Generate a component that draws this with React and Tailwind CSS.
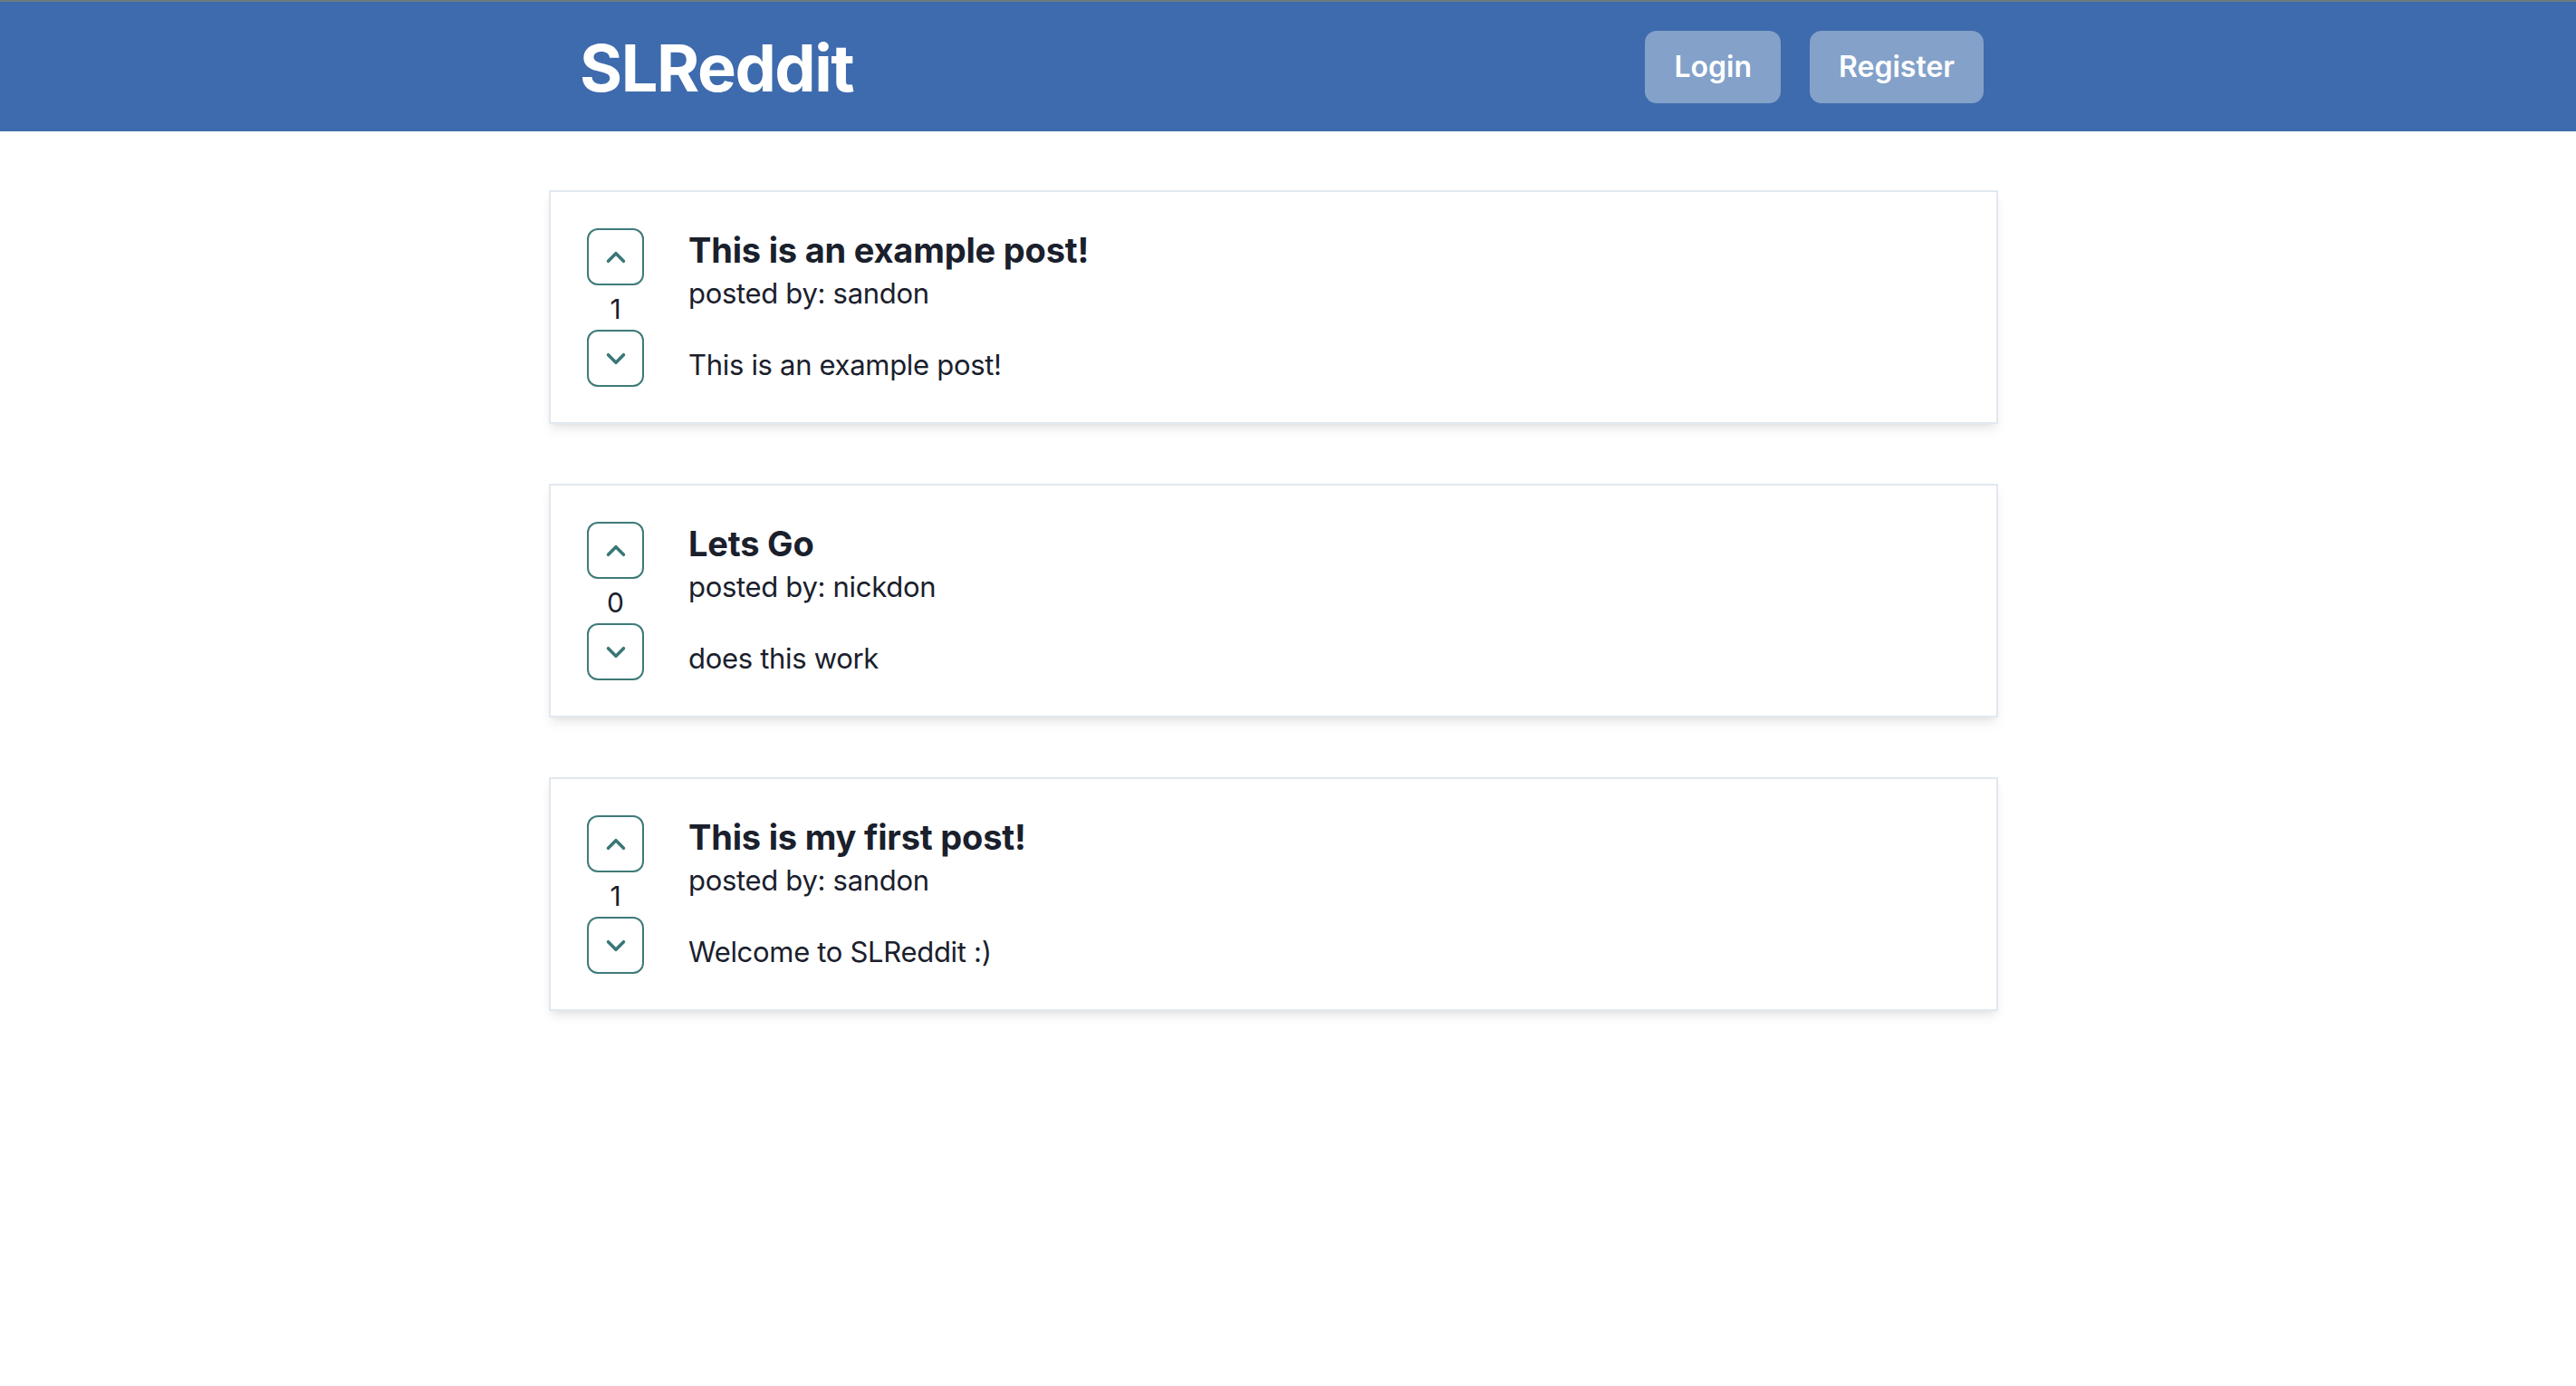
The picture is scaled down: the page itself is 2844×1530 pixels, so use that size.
import React, { useState } from "react";

const initialPosts = [
  { id: 1, title: "This is an example post!", author: "sandon", body: "This is an example post!", votes: 1 },
  { id: 2, title: "Lets Go", author: "nickdon", body: "does this work", votes: 0 },
  { id: 3, title: "This is my first post!", author: "sandon", body: "Welcome to SLReddit :)", votes: 1 },
];

/* -------------------- Chevron -------------------- */
const Chevron = ({ up }) => (
  <svg width="34" height="34" viewBox="0 0 24 24" fill="none">
    <path
      d={up ? "m18 15-6-6-6 6" : "m6 9 6 6 6-6"}
      stroke="#3a7777"
      strokeWidth="2.5"
      strokeLinecap="round"
      strokeLinejoin="round"
    />
  </svg>
);

const VoteButton = ({ up, onClick }) => (
  <button
    onClick={onClick}
    className="w-[63px] h-[63px] flex items-center justify-center rounded-[12px] border-2 border-[#3f7a7a] bg-white"
  >
    <Chevron up={up} />
  </button>
);

/* -------------------- Post card -------------------- */
function PostCard({ post, onVote }) {
  return (
    <div className="w-full flex items-start border-2 border-[#e2e8f0] bg-white px-[40px] pt-[40px] pb-[39px] shadow-[0_8px_12px_-2px_rgba(0,0,0,0.08),0_4px_8px_-4px_rgba(0,0,0,0.08)]">
      <div className="w-[63px] flex flex-col items-center">
        <VoteButton up onClick={() => onVote(post.id, 1)} />
        <span className="h-[49px] pt-[2px] leading-[49px] text-[30px] text-[#1a202c]">{post.votes}</span>
        <VoteButton onClick={() => onVote(post.id, -1)} />
      </div>
      <div className="ml-[49px] flex flex-col text-[#1a202c]">
        <h2 className="text-[38px] leading-[48px] font-bold tracking-[-0.005em]">{post.title}</h2>
        <p className="text-[31px] leading-[48px] tracking-[-0.01em]">posted by: {post.author}</p>
        <p className="mt-[31px] text-[31px] leading-[48px] tracking-[-0.01em]">{post.body}</p>
      </div>
    </div>
  );
}

export default function App() {
  const [posts, setPosts] = useState(initialPosts);

  const vote = (id, d) =>
    setPosts((p) => p.map((x) => (x.id === id ? { ...x, votes: x.votes + d } : x)));

  return (
    <div className="min-h-screen bg-white font-['Inter','Liberation_Sans',sans-serif]">
      {/* Header */}
      <div className="h-[2px] bg-[#6d7b7f]" />
      <header className="h-[143px] bg-[#3e6bad] pr-[32px]">
        <div className="w-[1600px] mx-auto h-full flex items-center justify-between pl-[34px] pr-[16px]">
          <h1 className="text-[72px] leading-none font-bold text-white tracking-[-0.02em] mt-[2px]">SLReddit</h1>
          <div className="flex gap-[32px]">
            <button className="h-[80px] px-[32px] rounded-[13px] bg-[#83a1c9] text-white text-[32px] font-semibold">
              Login
            </button>
            <button className="h-[80px] px-[32px] rounded-[13px] bg-[#83a1c9] text-white text-[32px] font-semibold">
              Register
            </button>
          </div>
        </div>
      </header>

      {/* Posts */}
      <main className="pr-[32px] pt-[65px]">
        <div className="w-[1600px] mx-auto flex flex-col gap-[66px]">
          {posts.map((p) => (
            <PostCard key={p.id} post={p} onVote={vote} />
          ))}
        </div>
      </main>
    </div>
  );
}
